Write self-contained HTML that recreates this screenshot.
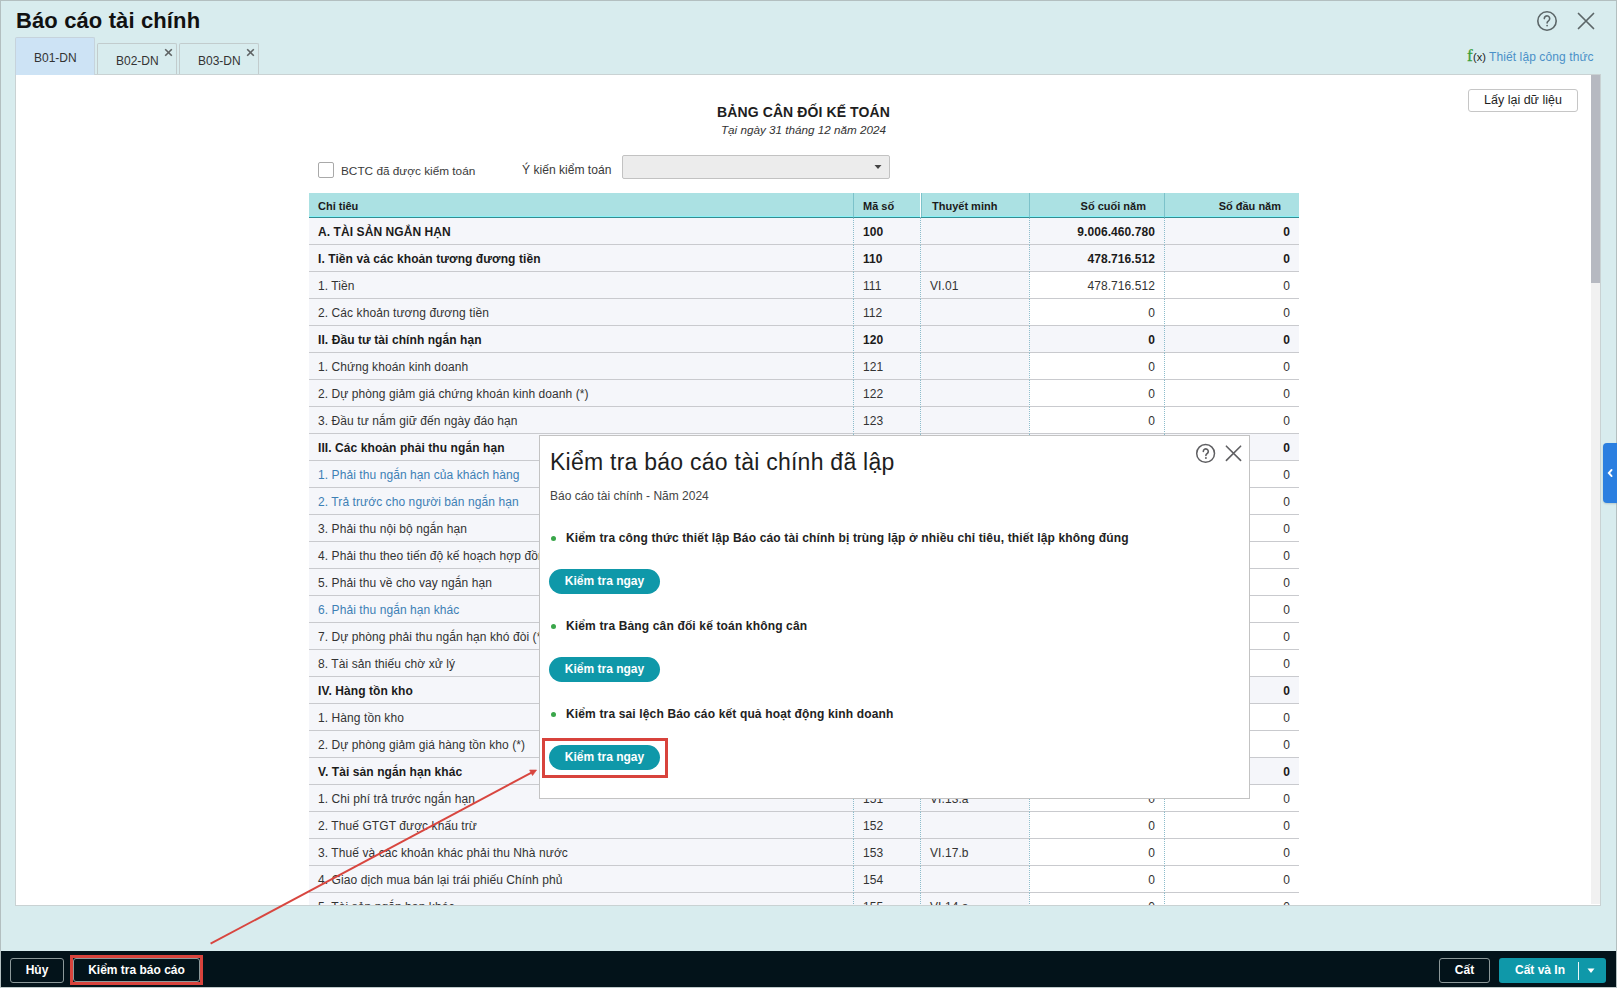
<!DOCTYPE html>
<html><head><meta charset="utf-8">
<style>
*{box-sizing:border-box;margin:0;padding:0}
html,body{width:1617px;height:988px;overflow:hidden}
body{position:relative;background:#d8ecee;font-family:"Liberation Sans",sans-serif;color:#212121;font-size:12px}
.abs{position:absolute;white-space:nowrap}
#frameT{left:0;top:0;width:1617px;height:1px;background:#b3bfc0}
#frameL{left:0;top:0;width:1px;height:988px;background:#b3bfc0}
#frameR{left:1616px;top:0;width:1px;height:988px;background:#b3bfc0}
#title{left:16px;top:8px;font-size:22px;font-weight:bold;color:#111;line-height:26px;letter-spacing:0.12px}
.tab{position:absolute;height:31px;top:43px;width:80px;border:1px solid #c2cccd;border-bottom:none;border-radius:2px 2px 0 0;background:#d8ecee;font-size:12px;color:#333}
.tab.act{top:37px;height:38px;z-index:2;background:#cde3f5;border-color:#c6d3dc}
.tab span{position:absolute;line-height:14px}
.tab .x{position:absolute;font-size:13px;color:#555;font-weight:bold}
#panel{left:15px;top:74px;width:1586px;height:832px;background:#fff;border:1px solid #c9d2d3;border-top:1px solid #c9d2d3}
#sbtrack{left:1591px;top:75px;width:9px;height:829px;background:#f1f1f1}
#sbthumb{left:1591px;top:75px;width:9px;height:208px;background:#b6b9c1}
#bluetab{left:1603px;top:443px;width:14px;height:60px;background:#2b7fe0;border-radius:4px 0 0 4px;box-shadow:0 1px 2px rgba(0,0,0,0.15)}
#footer{left:0;top:951px;width:1617px;height:37px;background:#03131a}

#rtitle{left:617px;width:373px;text-align:center;top:104px;font-size:14px;font-weight:bold;color:#1e1e1e;line-height:16px;letter-spacing:0.1px}
#rdate{left:617px;width:373px;text-align:center;top:123px;font-size:11.7px;font-style:italic;color:#333;line-height:14px}
#laylai{left:1468px;top:89px;width:110px;height:23px;border:1px solid #c6c6c6;border-radius:3px;background:#fff;font-size:12.5px;color:#1e1e1e;text-align:center;line-height:21px}
#chk{left:318px;top:162px;width:16px;height:16px;border:1px solid #a9a9a9;border-radius:2px;background:#fff}
#dd{left:622px;top:155px;width:268px;height:24px;border:1px solid #c2c2c2;border-radius:2px;background:#ececec}
#tbl{left:309px;top:193px;width:990px;height:712px;overflow:hidden}
table{border-collapse:separate;border-spacing:0;table-layout:fixed;width:990px}
th{height:25px;background:#abe1e3;border-bottom:1px solid #348c92;box-shadow:inset 0 -1px 0 #88f2f6;font-size:11px;font-weight:bold;text-align:left;padding:2px 9px 0 9px;color:#1b1b1b;vertical-align:middle}
th+th{border-left:1px solid #7cc2ca}
th:nth-child(3){padding-left:11px;border-left:1px solid #fff;box-shadow:inset 1px 0 0 #7cc2ca,inset 0 -1px 0 #88f2f6}
th.n{text-align:right;padding:2px 18px 0 9px}
td{height:27px;border-bottom:1px solid #c9cace;background:#f5f6fa;padding:2px 9px 0 9px;font-size:12px;color:#333;letter-spacing:0.08px;vertical-align:middle;white-space:nowrap;overflow:hidden}
td+td{border-left:1px dotted #8cbccb}
td.n{text-align:right;background:#fff}
tr.b td{font-weight:bold;background:#f5f6fa;color:#1b1b1b}
tr.l td:first-child{color:#3d80b5}
#dlg{left:539px;top:435px;width:711px;height:364px;background:#fff;border:1px solid #c3c3c3}
.dt{position:absolute;white-space:nowrap}
.bul{position:absolute;left:11px;width:5px;height:5px;border-radius:50%;background:#3aa64a}
.btn{position:absolute;left:9px;width:111px;height:25px;border-radius:13px;background:#0f98a9;color:#fff;font-weight:bold;font-size:12px;text-align:center;line-height:25px}
.redbox{position:absolute;border:3px solid #d8433c}
.fbtn{position:absolute;top:958px;height:25px;border:1px solid #8c9899;border-radius:3px;color:#fff;font-weight:bold;font-size:12px;text-align:center;line-height:23px}
</style></head><body>
<div class="abs" id="frameT"></div><div class="abs" id="frameL"></div><div class="abs" id="frameR"></div>
<div class="abs" id="title">Báo cáo tài chính</div>

<!-- top right icons -->
<svg class="abs" style="left:1535px;top:9px" width="24" height="24" viewBox="0 0 24 24">
  <circle cx="12" cy="12" r="9.2" fill="none" stroke="#5c6668" stroke-width="1.6"/>
  <path d="M9.3 9.6a2.7 2.7 0 1 1 4.2 2.2c-.9.6-1.4 1.1-1.4 2.1" fill="none" stroke="#5c6668" stroke-width="1.6" stroke-linecap="round"/>
  <circle cx="12.1" cy="16.6" r="0.9" fill="#5c6668"/>
</svg>
<svg class="abs" style="left:1576px;top:11px" width="20" height="20" viewBox="0 0 20 20">
  <path d="M2.5 2.5L17.5 17.5M17.5 2.5L2.5 17.5" stroke="#5c6668" stroke-width="1.7" stroke-linecap="round"/>
</svg>

<!-- tabs -->
<div class="tab act" style="left:15px"><span style="left:18px;top:13px">B01-DN</span></div>
<div class="tab" style="left:97px"><span style="left:18px;top:10px">B02-DN</span><svg class="x" style="left:66px;top:4px" width="9" height="9" viewBox="0 0 9 9"><path d="M1.2 1.2L7.8 7.8M7.8 1.2L1.2 7.8" stroke="#5e6263" stroke-width="1.6"/></svg></div>
<div class="tab" style="left:179px"><span style="left:18px;top:10px">B03-DN</span><svg class="x" style="left:66px;top:4px" width="9" height="9" viewBox="0 0 9 9"><path d="M1.2 1.2L7.8 7.8M7.8 1.2L1.2 7.8" stroke="#5e6263" stroke-width="1.6"/></svg></div>

<div class="abs" style="left:1467px;top:47px;font-family:'Liberation Serif',serif;font-size:17px;color:#3aa03a;line-height:18px;-webkit-text-stroke:0.3px #3aa03a">f</div>
<div class="abs" style="left:1473px;top:50px;font-size:11px;color:#222;line-height:14px">(x)</div>
<div class="abs" style="left:1489px;top:50px;font-size:12px;color:#4a90c8;line-height:14px;letter-spacing:0.1px">Thiết lập công thức</div>

<div class="abs" id="panel"></div>
<div class="abs" id="sbtrack"></div>
<div class="abs" id="sbthumb"></div>

<div class="abs" id="laylai">Lấy lại dữ liệu</div>
<div class="abs" id="rtitle">BẢNG CÂN ĐỐI KẾ TOÁN</div>
<div class="abs" id="rdate">Tại ngày 31 tháng 12 năm 2024</div>
<div class="abs" id="chk"></div>
<div class="abs" style="left:341px;top:164px;color:#3a3a3a;line-height:14px;font-size:11.8px">BCTC đã được kiểm toán</div>
<div class="abs" style="left:522px;top:163px;color:#3a3a3a;line-height:14px;font-size:12.1px">Ý kiến kiểm toán</div>
<div class="abs" id="dd"><svg style="position:absolute;left:251px;top:8px" width="8" height="6" viewBox="0 0 8 6"><path d="M0.5 1h7L4 5z" fill="#444"/></svg></div>
<div class="abs" id="tbl"><table>
<colgroup><col style="width:544px"><col style="width:67px"><col style="width:109px"><col style="width:135px"><col style="width:135px"></colgroup>
<thead><tr><th>Chỉ tiêu</th><th>Mã số</th><th>Thuyết minh</th><th class="n">Số cuối năm</th><th class="n">Số đầu năm</th></tr></thead>
<tbody>
<tr class="b"><td>A. TÀI SẢN NGẮN HẠN</td><td>100</td><td></td><td class="n">9.006.460.780</td><td class="n">0</td></tr>
<tr class="b"><td>I. Tiền và các khoản tương đương tiền</td><td>110</td><td></td><td class="n">478.716.512</td><td class="n">0</td></tr>
<tr><td>1. Tiền</td><td>111</td><td>VI.01</td><td class="n">478.716.512</td><td class="n">0</td></tr>
<tr><td>2. Các khoản tương đương tiền</td><td>112</td><td></td><td class="n">0</td><td class="n">0</td></tr>
<tr class="b"><td>II. Đầu tư tài chính ngắn hạn</td><td>120</td><td></td><td class="n">0</td><td class="n">0</td></tr>
<tr><td>1. Chứng khoán kinh doanh</td><td>121</td><td></td><td class="n">0</td><td class="n">0</td></tr>
<tr><td>2. Dự phòng giảm giá chứng khoán kinh doanh (*)</td><td>122</td><td></td><td class="n">0</td><td class="n">0</td></tr>
<tr><td>3. Đầu tư nắm giữ đến ngày đáo hạn</td><td>123</td><td></td><td class="n">0</td><td class="n">0</td></tr>
<tr class="b"><td>III. Các khoản phải thu ngắn hạn</td><td>130</td><td></td><td class="n">0</td><td class="n">0</td></tr>
<tr class="l"><td>1. Phải thu ngắn hạn của khách hàng</td><td>131</td><td>VI.03</td><td class="n">0</td><td class="n">0</td></tr>
<tr class="l"><td>2. Trả trước cho người bán ngắn hạn</td><td>132</td><td>VI.04</td><td class="n">0</td><td class="n">0</td></tr>
<tr><td>3. Phải thu nội bộ ngắn hạn</td><td>133</td><td></td><td class="n">0</td><td class="n">0</td></tr>
<tr><td>4. Phải thu theo tiến độ kế hoạch hợp đồng xây dựng</td><td>134</td><td></td><td class="n">0</td><td class="n">0</td></tr>
<tr><td>5. Phải thu về cho vay ngắn hạn</td><td>135</td><td></td><td class="n">0</td><td class="n">0</td></tr>
<tr class="l"><td>6. Phải thu ngắn hạn khác</td><td>136</td><td>VI.05</td><td class="n">0</td><td class="n">0</td></tr>
<tr><td>7. Dự phòng phải thu ngắn hạn khó đòi (*)</td><td>137</td><td></td><td class="n">0</td><td class="n">0</td></tr>
<tr><td>8. Tài sản thiếu chờ xử lý</td><td>139</td><td></td><td class="n">0</td><td class="n">0</td></tr>
<tr class="b"><td>IV. Hàng tồn kho</td><td>140</td><td></td><td class="n">0</td><td class="n">0</td></tr>
<tr><td>1. Hàng tồn kho</td><td>141</td><td>VI.07</td><td class="n">0</td><td class="n">0</td></tr>
<tr><td>2. Dự phòng giảm giá hàng tồn kho (*)</td><td>149</td><td></td><td class="n">0</td><td class="n">0</td></tr>
<tr class="b"><td>V. Tài sản ngắn hạn khác</td><td>150</td><td></td><td class="n">0</td><td class="n">0</td></tr>
<tr><td>1. Chi phí trả trước ngắn hạn</td><td>151</td><td>VI.13.a</td><td class="n">0</td><td class="n">0</td></tr>
<tr><td>2. Thuế GTGT được khấu trừ</td><td>152</td><td></td><td class="n">0</td><td class="n">0</td></tr>
<tr><td>3. Thuế và các khoản khác phải thu Nhà nước</td><td>153</td><td>VI.17.b</td><td class="n">0</td><td class="n">0</td></tr>
<tr><td>4. Giao dịch mua bán lại trái phiếu Chính phủ</td><td>154</td><td></td><td class="n">0</td><td class="n">0</td></tr>
<tr><td>5. Tài sản ngắn hạn khác</td><td>155</td><td>VI.14.a</td><td class="n">0</td><td class="n">0</td></tr>

</tbody></table></div>

<div class="abs" id="dlg">
  <div class="dt" style="left:10px;top:12px;font-size:23px;letter-spacing:0.25px;color:#1e1e1e;line-height:28px">Kiểm tra báo cáo tài chính đã lập</div>
  <svg class="dt" style="left:655px;top:6px" width="22" height="22" viewBox="0 0 22 22">
    <circle cx="10.6" cy="11.4" r="8.9" fill="none" stroke="#5f5f62" stroke-width="1.5"/>
    <path d="M8.3 9.4a2.5 2.5 0 1 1 3.9 2.1c-.8.5-1.3 1-1.3 1.9" fill="none" stroke="#5f5f62" stroke-width="1.6" stroke-linecap="round"/>
    <circle cx="10.9" cy="16" r="0.95" fill="#5f5f62"/>
  </svg>
  <svg class="dt" style="left:685px;top:9px" width="18" height="18" viewBox="0 0 18 18">
    <path d="M1.4 1.2L15.6 15.4M15.6 1.2L1.4 15.4" stroke="#5f5f62" stroke-width="1.6" stroke-linecap="round"/>
  </svg>
  <div class="dt" style="left:10px;top:53px;font-size:12px;color:#444;line-height:14px">Báo cáo tài chính - Năm 2024</div>
  <div class="bul" style="top:100px"></div>
  <div class="dt" style="left:26px;top:95px;font-size:12px;font-weight:bold;color:#222;line-height:14px;letter-spacing:0.15px">Kiểm tra công thức thiết lập Báo cáo tài chính bị trùng lặp ở nhiều chỉ tiêu, thiết lập không đúng</div>
  <div class="btn" style="top:133px">Kiểm tra ngay</div>
  <div class="bul" style="top:188px"></div>
  <div class="dt" style="left:26px;top:183px;font-size:12px;font-weight:bold;color:#222;line-height:14px;letter-spacing:0.15px">Kiểm tra Bảng cân đối kế toán không cân</div>
  <div class="btn" style="top:221px">Kiểm tra ngay</div>
  <div class="bul" style="top:276px"></div>
  <div class="dt" style="left:26px;top:271px;font-size:12px;font-weight:bold;color:#222;line-height:14px;letter-spacing:0.15px">Kiểm tra sai lệch Báo cáo kết quả hoạt động kinh doanh</div>
  <div class="btn" style="top:309px">Kiểm tra ngay</div>
  <div class="redbox" style="left:2px;top:302px;width:126px;height:40px"></div>
</div>
<div class="abs" id="bluetab"><svg style="position:absolute;left:3px;top:24px" width="8" height="12" viewBox="0 0 8 12"><path d="M5.6 2.9L2.8 6l2.8 3.1" fill="none" stroke="#fff" stroke-width="1.9" stroke-linecap="round"/></svg></div>

<div class="abs" id="footer"></div><div class="abs" style="left:0;top:0;width:1px;height:988px;background:#b3bfc0"></div><div class="abs" style="left:0;top:987px;width:1617px;height:1px;background:#bfcaca"></div><div class="abs" style="left:1616px;top:951px;width:1px;height:37px;background:#b3bfc0"></div>
<div class="fbtn" style="left:10px;width:54px">Hủy</div>
<div class="fbtn" style="left:73px;width:127px;height:24px">Kiểm tra báo cáo</div>
<div class="abs" style="left:70px;top:955px;width:133px;height:30px;border:3px solid #d8433c"></div>
<div class="fbtn" style="left:1439px;width:51px">Cất</div>
<div class="abs" style="left:1499px;top:958px;width:107px;height:25px;background:#0f98a9;border-radius:3px;color:#fff;font-weight:bold;font-size:12px;line-height:25px">
  <span style="position:absolute;left:16px;top:0">Cất và In</span>
  <div style="position:absolute;left:79px;top:4px;width:1px;height:18px;background:#e8f6f8"></div>
  <svg style="position:absolute;left:88px;top:10px" width="8" height="6" viewBox="0 0 8 6"><path d="M0.5 0.5h7L4 5z" fill="#fff"/></svg>
</div>
<svg class="abs" style="left:0;top:0" width="1617" height="988" viewBox="0 0 1617 988">
  <line x1="210.6" y1="943.7" x2="532" y2="772.4" stroke="#d8463f" stroke-width="1.9"/>
  <path d="M536.6 770L529.6 770L532.5 775.6z" fill="#d8463f" stroke="#d8463f" stroke-width="0.6" stroke-linejoin="round"/>
</svg>

</body></html>
